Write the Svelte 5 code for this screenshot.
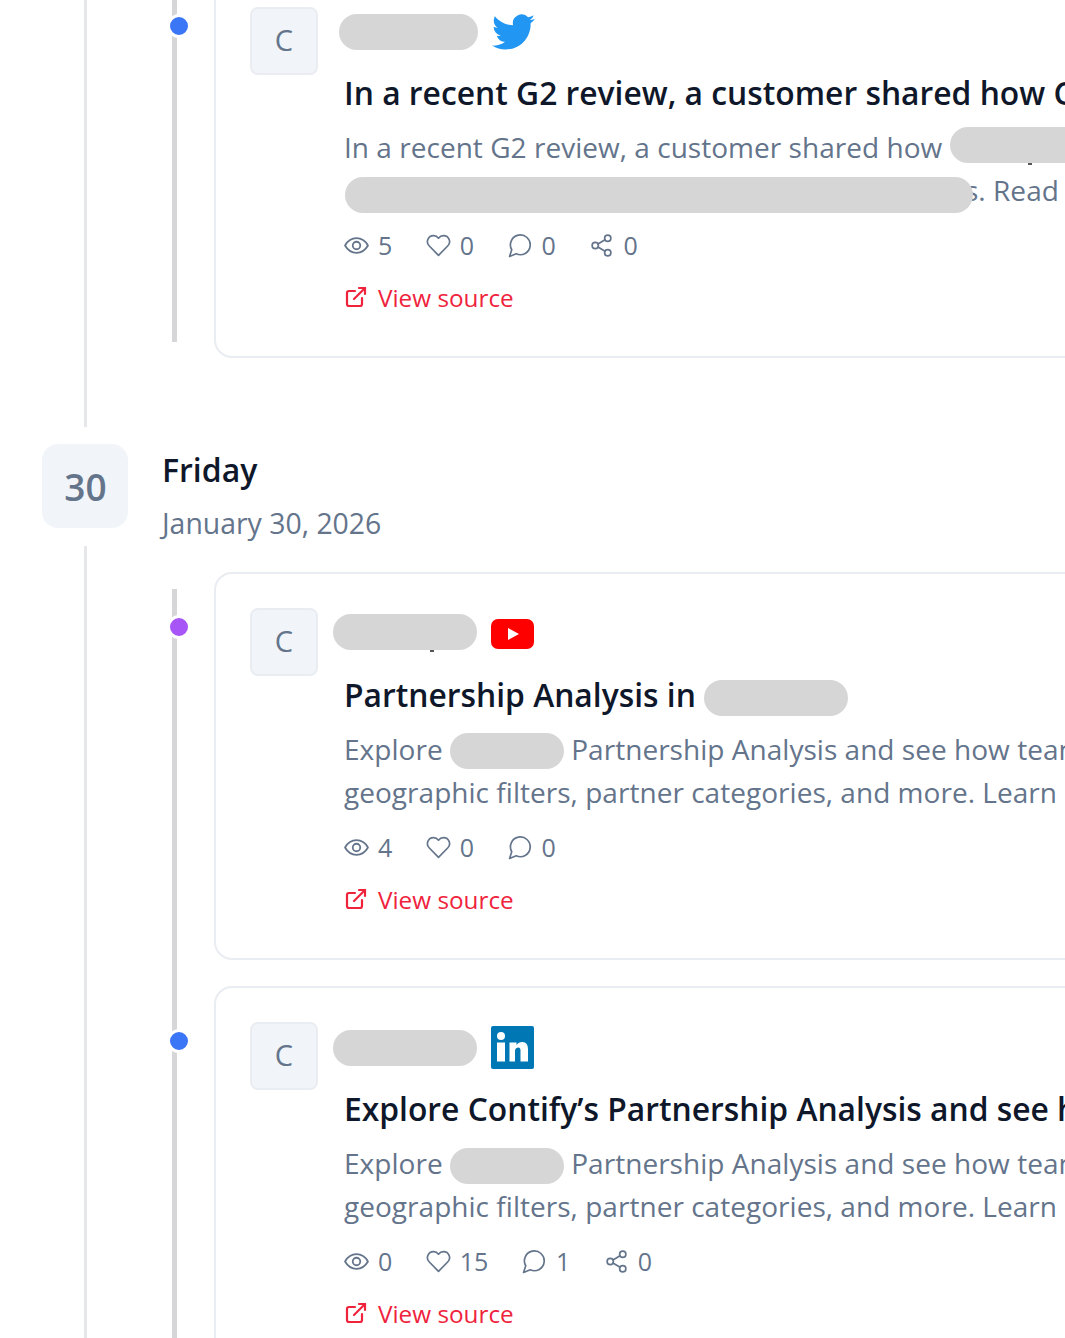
<script>
  const days = [
    {
      head: null,
      posts: [
        {
          dot: 'blue', source: 'twitter', nameW: 139, nameX: -5, nameY: 0,
          title: [{ t: 'In a recent G2 review, a customer shared how Contify' }],
          lines: [
            [{ t: 'In a recent G2 review, a customer shared how ' }, { p: 200, x: 0, y: -4, tail: 78 }],
            [{ p: 628, x: 1, y: 3 }, { t: 's. Read more', under: true }]
          ],
          stats: { views: 5, likes: 0, comments: 0, shares: 0 }
        }
      ]
    },
    {
      head: { num: 30, name: 'Friday', date: 'January 30, 2026' },
      posts: [
        {
          dot: 'purple', source: 'youtube', nameW: 144, nameX: -11, nameY: -2, nameTail: 97,
          title: [{ t: 'Partnership Analysis in ' }, { p: 144, x: 0, y: 0 }],
          lines: [
            [{ t: 'Explore ' }, { p: 114, x: 0, y: 0 }, { t: ' Partnership Analysis and see how teams compare' }],
            [{ t: 'geographic filters, partner categories, and more. Learn more' }]
          ],
          stats: { views: 4, likes: 0, comments: 0 }
        },
        {
          dot: 'blue', source: 'linkedin', nameW: 144, nameX: -11, nameY: 2,
          title: [{ t: 'Explore Contify’s Partnership Analysis and see how' }],
          lines: [
            [{ t: 'Explore ' }, { p: 114, x: 0, y: 1 }, { t: ' Partnership Analysis and see how teams compare' }],
            [{ t: 'geographic filters, partner categories, and more. Learn more' }]
          ],
          stats: { views: 0, likes: 15, comments: 1, shares: 0 }
        }
      ]
    }
  ];
</script>

<div class="page">
  <div class="feed">
    {#each days as day}
      {#if day.head}
        <header class="day-head">
          <div class="day-num">{day.head.num}</div>
          <div class="day-text">
            <div class="day-name">{day.head.name}</div>
            <div class="day-date">{day.head.date}</div>
          </div>
        </header>
      {/if}
      <div class="track" class:first={!day.head}>
        <div class="items">
          {#each day.posts as post}
            <article class="card">
              <span class="dot {post.dot}"></span>
              <div class="avatar">C</div>
              <div class="body">
                <div class="meta {post.source}">
                  <span class="pill" style="width: {post.nameW}px; margin-left: {post.nameX}px; margin-top: {post.nameY}px">
                    {#if post.nameTail}<i class="tail" style="left: {post.nameTail}px"></i>{/if}
                  </span>
                  {#if post.source === 'twitter'}
                    <svg class="src" width="43" height="36" viewBox="0 0 24 20" fill="#2196f3">
                      <path d="M23.953 2.57a10 10 0 0 1-2.825.775 4.958 4.958 0 0 0 2.163-2.723c-.951.555-2.005.959-3.127 1.184a4.92 4.92 0 0 0-8.384 4.482C7.69 6.095 4.067 4.13 1.64 1.162a4.822 4.822 0 0 0-.666 2.475c0 1.71.87 3.213 2.188 4.096a4.904 4.904 0 0 1-2.228-.616v.06a4.923 4.923 0 0 0 3.946 4.827 4.996 4.996 0 0 1-2.212.085 4.936 4.936 0 0 0 4.604 3.417 9.867 9.867 0 0 1-6.102 2.105c-.39 0-.779-.023-1.17-.067a13.995 13.995 0 0 0 7.557 2.209c9.053 0 13.998-7.496 13.998-13.985 0-.21 0-.42-.015-.63A9.935 9.935 0 0 0 24 2.59z"/>
                    </svg>
                  {:else if post.source === 'youtube'}
                    <svg class="src yt" width="43" height="30" viewBox="0 0 43 30">
                      <rect width="43" height="30" rx="7" fill="#ff0000"/>
                      <path d="M17 9l11 6-11 6z" fill="#fff"/>
                    </svg>
                  {:else}
                    <svg class="src" width="43" height="43" viewBox="0 0 43 43">
                      <rect width="43" height="43" rx="2" fill="#0077b5"/>
                      <circle cx="10" cy="10" r="4" fill="#fff"/>
                      <rect x="6" y="16.500" width="8" height="19" fill="#fff"/>
                      <path d="M18.500 35.500v-19h7v2.600c1.300-2 3.400-3.100 5.800-3.100 4 0 5.700 2.900 5.700 7.300v12.200h-7.500V24.600c0-2-.7-3-2.200-3-1.800 0-3.300 1.200-3.300 3.400v10.500z" fill="#fff"/>
                    </svg>
                  {/if}
                </div>

                <h3 class="title">
                  {#each post.title as part}
                    {#if part.p}<span class="pill in-title" style="width: {part.p}px"></span>{:else}{part.t}{/if}
                  {/each}
                </h3>

                <div class="desc">
                  {#each post.lines as line}
                    <div class="line">
                      {#each line as part}
                        {#if part.p}<span class="pill in-text" style="width: {part.p}px; margin-left: {part.x}px; translate: 0 {part.y}px">
                          {#if part.tail}<i class="tail" style="left: {part.tail}px"></i>{/if}
                        </span>{:else}<span class:under={part.under}>{part.t}</span>{/if}
                      {/each}
                    </div>
                  {/each}
                </div>

                <div class="stats">
                  <span class="stat">
                    <svg width="25" height="25" viewBox="0 0 24 24" fill="none" stroke="currentColor" stroke-width="1.7" stroke-linecap="round" stroke-linejoin="round">
                      <path d="M1 12c2.600-4.600 6.300-7 11-7s8.400 2.400 11 7c-2.600 4.600-6.300 7-11 7s-8.400-2.400-11-7z"/>
                      <circle cx="12" cy="12" r="3.600"/>
                    </svg>
                    {post.stats.views}
                  </span>
                  <span class="stat">
                    <svg width="25" height="25" viewBox="0 0 24 24" fill="none" stroke="currentColor" stroke-width="1.6" stroke-linecap="round" stroke-linejoin="round">
                      <path d="M12 21.500l-8.800-9A5.800 5.800 0 0 1 7.300 2.500c1.900 0 3.500.9 4.700 2.500 1.200-1.600 2.800-2.500 4.700-2.500a5.800 5.800 0 0 1 4.100 10z"/>
                    </svg>
                    {post.stats.likes}
                  </span>
                  <span class="stat">
                    <svg width="25" height="25" viewBox="0 0 24 24" fill="none" stroke="currentColor" stroke-width="1.6" stroke-linecap="round" stroke-linejoin="round">
                      <path d="M7.900 20A9.500 9.500 0 1 0 3.600 16.100L1.500 22.500z"/>
                    </svg>
                    {post.stats.comments}
                  </span>
                  {#if post.stats.shares !== undefined}
                    <span class="stat">
                      <svg width="25" height="25" viewBox="0 0 24 24" fill="none" stroke="currentColor" stroke-width="1.6" stroke-linecap="round" stroke-linejoin="round">
                        <circle cx="18" cy="5" r="3"/>
                        <circle cx="6" cy="12" r="3"/>
                        <circle cx="18" cy="19" r="3"/>
                        <path d="M8.600 13.500l6.800 4M15.400 6.500l-6.800 4"/>
                      </svg>
                      {post.stats.shares}
                    </span>
                  {/if}
                </div>

                <div class="view-source">
                  <svg width="24" height="24" viewBox="0 0 24 24" fill="none" stroke="currentColor" stroke-width="2.200" stroke-linecap="round" stroke-linejoin="round">
                    <path d="M18 13v6a2 2 0 0 1-2 2H5a2 2 0 0 1-2-2V8a2 2 0 0 1 2-2h6"/>
                    <path d="M15 3h6v6"/>
                    <path d="M10 14L21 3"/>
                  </svg>
                  View source
                </div>
              </div>
            </article>
          {/each}
        </div>
      </div>
    {/each}
  </div>
</div>

<style>
  :global(body) {
    margin: 0;
    background: #fff;
  }

  .page {
    width: 1065px;
    height: 1338px;
    overflow: hidden;
    font-family: "Open Sans", "Noto Sans", sans-serif;
  }

  .feed {
    margin-top: -29px;
    width: 1400px;
  }

  .track {
    margin-left: 84px;
    border-left: 3px solid #e5e7eb;
    padding: 26px 0 0 127px;
  }

  .track.first {
    padding: 0 0 69px 127px;
  }

  .items {
    position: relative;
    display: flex;
    flex-direction: column;
    gap: 26px;
  }

  .items::before {
    content: "";
    position: absolute;
    left: -42px;
    top: 17px;
    bottom: 16px;
    width: 5px;
    background: #d6d6d8;
  }

  .card {
    position: relative;
    display: flex;
    gap: 26px;
    padding: 34px 34px 42px;
    border: 2px solid #e9ecf1;
    border-radius: 18px;
    background: #fff;
  }

  .dot {
    position: absolute;
    left: -49px;
    top: 41px;
    width: 18px;
    height: 18px;
    border-radius: 50%;
    border: 3px solid #fff;
  }

  .dot.blue { background: #3b76f6; }
  .dot.purple { background: #a855f7; }

  .avatar {
    flex: none;
    box-sizing: border-box;
    width: 68px;
    height: 68px;
    padding-bottom: 4px;
    display: flex;
    align-items: center;
    justify-content: center;
    background: #f1f5f9;
    border: 2px solid #e9edf2;
    border-radius: 8px;
    color: #64748b;
    font-size: 29px;
    font-weight: 500;
  }

  .body {
    flex: 1;
    min-width: 0;
  }

  .meta {
    height: 50px;
    display: flex;
    align-items: center;
    gap: 14px;
  }

  .meta.twitter {
    height: 49px;
  }

  .src.yt {
    margin-top: 2px;
  }

  .pill {
    display: inline-block;
    height: 36px;
    border-radius: 18px;
    background: #d6d6d6;
    vertical-align: middle;
    position: relative;
  }

  .pill.in-text {
    margin-top: -3px;
  }

  .tail {
    position: absolute;
    bottom: -2px;
    width: 4px;
    height: 2px;
    background: #555;
  }

  .title {
    margin: 15px 0 0;
    font-size: 31.8px;
    font-weight: 600;
    line-height: 44px;
    color: #0f172a;
    white-space: nowrap;
  }

  .desc {
    margin-top: 11px;
    font-size: 28px;
    letter-spacing: 0.03px;
    line-height: 43px;
    color: #64748b;
    white-space: nowrap;
  }

  .line .under {
    margin-left: -8px;
  }

  .stats {
    margin-top: 16px;
    height: 34px;
    display: flex;
    align-items: center;
    gap: 33.5px;
    font-size: 25px;
    color: #64748b;
  }

  .stat {
    display: flex;
    align-items: center;
    gap: 9px;
  }

  .view-source {
    margin-top: 18px;
    height: 34px;
    display: flex;
    align-items: center;
    gap: 10px;
    font-size: 24.3px;
    color: #ef233c;
  }

  .day-head {
    margin: 17px 0 0 42px;
    display: flex;
    gap: 34px;
    height: 102px;
  }

  .day-num {
    width: 86px;
    height: 84px;
    padding-left: 1px;
    box-sizing: border-box;
    display: flex;
    align-items: center;
    justify-content: center;
    border-radius: 16px;
    background: #f1f5f9;
    color: #64748b;
    font-size: 37px;
    font-weight: 600;
  }

  .day-text {
    padding-top: 4px;
  }

  .day-name {
    font-size: 32px;
    font-weight: 600;
    line-height: 44px;
    color: #0f172a;
  }

  .day-date {
    margin-top: 9px;
    font-size: 28.4px;
    line-height: 44px;
    color: #64748b;
  }
</style>
